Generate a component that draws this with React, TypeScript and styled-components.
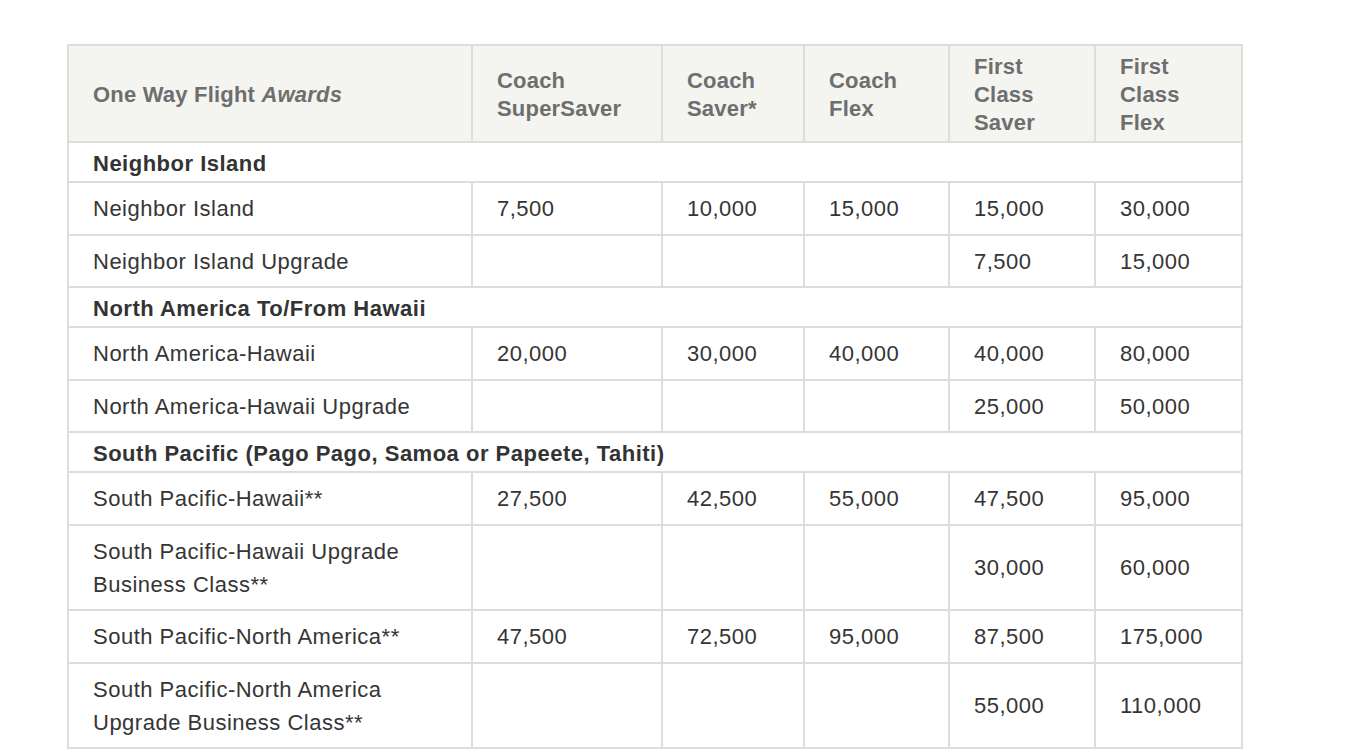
import React from "react";
import styled, { createGlobalStyle } from "styled-components";

const GlobalStyle = createGlobalStyle`
  html, body { margin: 0; padding: 0; background: #ffffff; }
  body { font-family: "Liberation Sans", Arial, Helvetica, sans-serif; }
`;

const Page = styled.div`
  padding: 44px 0 0 67px;
`;

const Table = styled.table`
  width: 1174px;
  border-collapse: collapse;
  table-layout: fixed;
  font-family: "Liberation Sans", Arial, Helvetica, sans-serif;
  font-size: 22px;
  color: #353535;
  border: 2px solid #dddddd;
`;

const HeadCell = styled.th`
  background: #f4f4f0;
  color: #6e6e6e;
  font-weight: 700;
  text-align: left;
  vertical-align: middle;
  line-height: 28px;
  letter-spacing: 0.2px;
  padding: 7px 16px 4px 24px;
  border: 2px solid #dddddd;
`;

const SectionCell = styled.td`
  font-weight: 700;
  color: #333333;
  line-height: 33px;
  letter-spacing: 0.5px;
  padding: 4px 24px 1px 24px;
  border: 2px solid #dddddd;
`;

const Cell = styled.td`
  vertical-align: middle;
  line-height: 33px;
  letter-spacing: 0.5px;
  padding: 9px 16px 8.5px 24px;
  border: 2px solid #dddddd;
  color: #353535;
`;

type Row =
  | { kind: "section"; title: string }
  | { kind: "data"; label: string; values: string[] };

const columns: { label: React.ReactNode; width: number }[] = [
  { label: <>One Way Flight <em>Awards</em></>, width: 404 },
  { label: <>Coach<br />SuperSaver</>, width: 190 },
  { label: <>Coach<br />Saver*</>, width: 142 },
  { label: <>Coach<br />Flex</>, width: 145 },
  { label: <>First<br />Class<br />Saver</>, width: 146 },
  { label: <>First<br />Class<br />Flex</>, width: 147 },
];

const rows: Row[] = [
  { kind: "section", title: "Neighbor Island" },
  { kind: "data", label: "Neighbor Island", values: ["7,500", "10,000", "15,000", "15,000", "30,000"] },
  { kind: "data", label: "Neighbor Island Upgrade", values: ["", "", "", "7,500", "15,000"] },
  { kind: "section", title: "North America To/From Hawaii" },
  { kind: "data", label: "North America-Hawaii", values: ["20,000", "30,000", "40,000", "40,000", "80,000"] },
  { kind: "data", label: "North America-Hawaii Upgrade", values: ["", "", "", "25,000", "50,000"] },
  { kind: "section", title: "South Pacific (Pago Pago, Samoa or Papeete, Tahiti)" },
  { kind: "data", label: "South Pacific-Hawaii**", values: ["27,500", "42,500", "55,000", "47,500", "95,000"] },
  { kind: "data", label: "South Pacific-Hawaii Upgrade Business Class**", values: ["", "", "", "30,000", "60,000"] },
  { kind: "data", label: "South Pacific-North America**", values: ["47,500", "72,500", "95,000", "87,500", "175,000"] },
  { kind: "data", label: "South Pacific-North America Upgrade Business Class**", values: ["", "", "", "55,000", "110,000"] },
];

export default function App() {
  return (
    <>
      <GlobalStyle />
      <Page>
        <Table>
          <colgroup>
            {columns.map((c, i) => (
              <col key={i} style={{ width: c.width }} />
            ))}
          </colgroup>
          <thead>
            <tr>
              {columns.map((c, i) => (
                <HeadCell key={i}>{c.label}</HeadCell>
              ))}
            </tr>
          </thead>
          <tbody>
            {rows.map((r, i) =>
              r.kind === "section" ? (
                <tr key={i}>
                  <SectionCell colSpan={6}>{r.title}</SectionCell>
                </tr>
              ) : (
                <tr key={i}>
                  <Cell>{r.label}</Cell>
                  {r.values.map((v, j) => (
                    <Cell key={j}>{v}</Cell>
                  ))}
                </tr>
              )
            )}
          </tbody>
        </Table>
      </Page>
    </>
  );
}
